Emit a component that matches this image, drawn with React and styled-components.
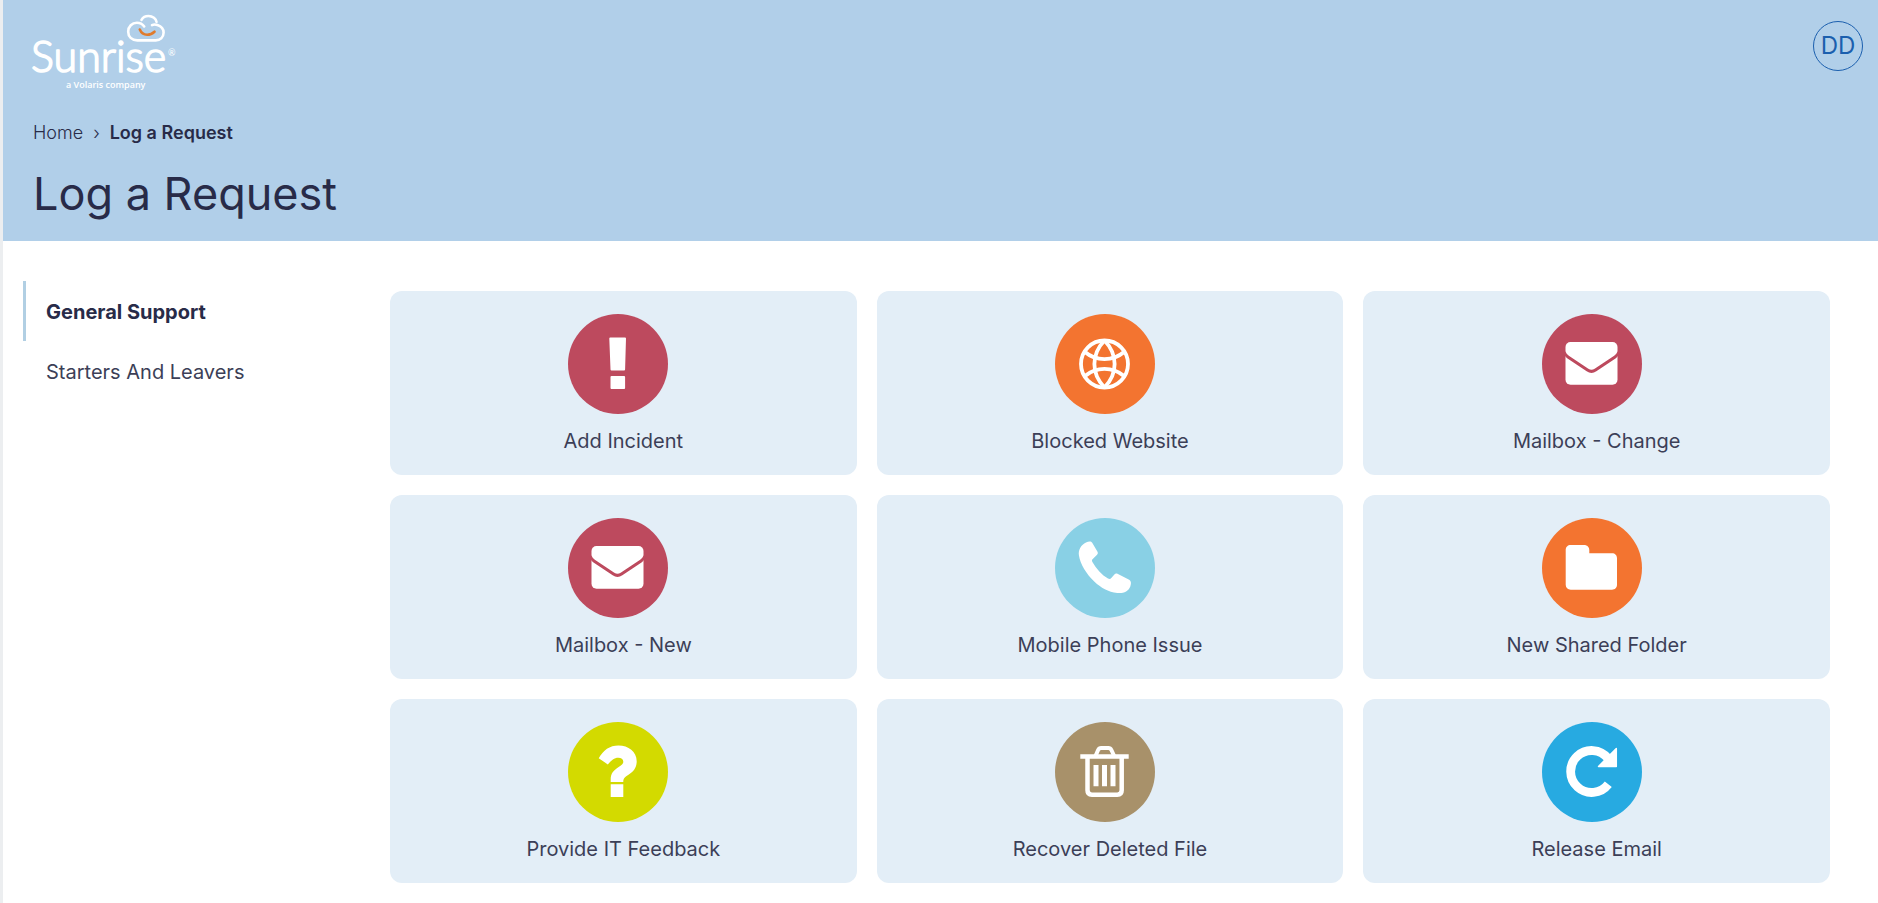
import React from "react";
import styled, { createGlobalStyle } from "styled-components";

const GlobalStyle = createGlobalStyle`
  *, *::before, *::after { box-sizing: border-box; }
  body {
    margin: 0;
    background: #fff;
    color: #282b48;
    font-family: Inter, "Open Sans", sans-serif;
    font-weight: 400;
  }
  a { color: inherit; text-decoration: none; }
`;

const Page = styled.div`
  min-height: 100vh;
  border-left: 3px solid #eceef0;
`;

const Header = styled.header`
  background: #b1cfe9;
  padding: 12px 15px 17px 30px;
`;

const TopBar = styled.div`
  display: flex;
  justify-content: space-between;
  align-items: flex-start;
`;

const LogoLink = styled.a`
  display: block;
  margin-left: -4px;
  line-height: 0;
`;

const Avatar = styled.button`
  width: 50px;
  height: 50px;
  margin-top: 9px;
  padding: 0;
  border: 1px solid #1b5fae;
  border-radius: 50%;
  background: transparent;
  color: #1b5fae;
  font: 400 24px/48px Inter, sans-serif;
  cursor: pointer;
`;

const Breadcrumb = styled.ol`
  display: flex;
  gap: 10px;
  margin: 29px 0 0;
  padding: 0;
  list-style: none;
  font-size: 18px;
  line-height: 24px;
`;

const Crumb = styled.li`
  font-weight: ${(p) => (p.$current ? 600 : 300)};
`;

const Title = styled.h1`
  margin: 19px 0 0;
  font-size: 45px;
  line-height: 60px;
  font-weight: 400;
`;

const Body = styled.div`
  display: grid;
  grid-template-columns: 347px 1fr;
  gap: 20px;
  padding: 40px 48px 20px 20px;
`;

const NavLink = styled.a`
  display: block;
  height: 60px;
  padding: 0 20px;
  border-left: 3px solid ${(p) => (p.$active ? "#b1cfe3" : "transparent")};
  color: ${(p) => (p.$active ? "#282b48" : "#3c3f57")};
  font-size: 20px;
  line-height: 62px;
  font-weight: ${(p) => (p.$active ? 700 : 400)};
`;

const CardGrid = styled.main`
  display: grid;
  grid-template-columns: repeat(3, 1fr);
  gap: 20px;
  padding-top: 10px;
`;

const Card = styled.a`
  display: flex;
  flex-direction: column;
  align-items: center;
  gap: 12px;
  padding: 23px 20px 19px;
  border-radius: 12px;
  background: #e3eef7;
  color: #3c3f57;
  font-size: 20px;
  line-height: 30px;
`;

const Badge = styled.svg`
  display: block;
  width: 100px;
  height: 100px;
  margin-right: 10px;
  border-radius: 50%;
  background: ${(p) => p.$color};
`;

const Logo = () => (
  <svg width="150" height="80" viewBox="-4 0 150 80" role="img" aria-label="Sunrise, a Volaris company">
    <g fill="none" strokeLinecap="round" strokeWidth="2.6">
      <path
        stroke="#fff"
        d="M119 13.200c1.500-0.800 3.700-0.800 5.400-0.200 3.500 1.200 6.200 3.500 6.200 7.600 0 5-3.600 7.800-7.800 7.800h-18.500c-5.600 0-9.100-3.700-9.100-8.700 0-5.300 3.900-8.900 8.700-8.900 3.200 0 5.600 1.300 7.300 3.700"
      />
      <path stroke="#fff" d="M108.500 7.800c1.400-2.500 4-3.800 7-3.800 4.200 0 7.600 2.900 8 5.900" />
      <path stroke="#e07b2c" d="M106.800 17.500c1.400 3.300 4 5.200 7.300 5.200 2.800 0 5.400-1.100 7.400-3" />
    </g>
    <text x="-2" y="60" fill="#fff" stroke="#fff" strokeWidth="1.6" strokeLinejoin="round" fontFamily="Lato, sans-serif" fontSize="43" fontWeight="300">
      Sunrise
    </text>
    <text x="135" y="44" fill="#fff" fontFamily="Lato, sans-serif" fontSize="9">®</text>
    <text x="33" y="76" fill="#fff" fontFamily="Open Sans, sans-serif" fontSize="9" fontWeight="600">
      a Volaris company
    </text>
  </svg>
);

const glyphs = {
  alert: (
    <g fill="#fff" stroke="#fff" strokeWidth="2" strokeLinejoin="round">
      <path d="M42.300 24.500h14.700l-0.900 31h-12.600z" />
      <path d="M43.500 63h12.600v11h-12.600z" />
    </g>
  ),
  globe: (
    <g fill="none" stroke="#fff" strokeWidth="3.800">
      <circle cx="49.500" cy="50" r="23.500" />
      <path d="M49.500 26.500c-13.500 14-13.500 33 0 47M49.500 26.500c13.500 14 13.500 33 0 47" />
      <path d="M30 38c11 9.500 28 9.500 39 0M30 62c11-9.500 28-9.500 39 0" />
    </g>
  ),
  mail: (color) => (
    <g>
      <rect x="23.500" y="28" width="52" height="42.700" rx="5" fill="#fff" />
      <path d="M22 38c1 2.500 2.300 3.700 4 5l19.500 13q4 2.800 8 0l19.500-13c1.700-1.300 3-2.500 4-5" fill="none" stroke={color} strokeWidth="3" />
    </g>
  ),
  phone: (
    <path
      fill="#fff"
      d="M31 24.500c2.500-1.200 5-1.800 6.200 0.200l5.300 9c0.700 1.200 0.300 2.300-0.700 3.300l-4.300 4.300c-0.700 0.700-0.700 1.600-0.100 2.600 4 7 9.300 12.800 15.600 16.700 1.200 0.700 2.500 0.600 3.300-0.500l3.100-3.700c0.900-1 1.900-1.200 3.100-0.600l11.200 5.800c2.600 1.400 2.700 3.900 1.600 6.900-2 5.200-7 7-13 6.400-9-0.900-16.500-5.300-22.800-11.200-8-7.600-14.400-17.800-15.600-26.500-0.800-5.400 2.200-10.400 7.100-12.700z"
    />
  ),
  folder: (
    <path
      fill="#fff"
      d="M28.700 27h13.300c3.300 0 5.300 2.200 5.300 5.200v3.100h22.700c3 0 5 2 5 5v26.500c0 3-2 4.900-5 4.900h-41.300c-3 0-5-1.900-5-4.900v-34.800c0-3 2-5 5-5z"
    />
  ),
  question: (
    <g fill="#fff">
      <path d="M30.700 36.300c4.500-8.300 11-12.900 19.800-12.900 9.800 0 18.200 6.200 18.200 15.800 0 6.900-3.400 10.400-8.600 13.800-3.400 2.200-4.800 3.500-4.800 7h-12.600v-2.300c0-6.200 2.800-9.200 7.600-12.400 3.600-2.400 5-3.500 5-5.600 0-2.400-2.100-4-5-4-4.300 0-7 2.700-10.500 6.700z" />
      <path d="M42.700 62.300h12.600v12.700h-12.600z" />
    </g>
  ),
  trash: (
    <g fill="none" stroke="#fff" strokeWidth="4.500">
      <path d="M25.300 34.500h48.400M32.500 35v33.300q0 4.400 4.400 4.400h25.400q4.400 0 4.400-4.400v-33.300" />
      <path d="M40.500 34l2.600-6q1-2.100 3-2.100h7.300q2 0 3 2.100l2.800 6" strokeWidth="4" />
      <path d="M41 43v21.300M49.500 43v21.300M58 43v21.300" strokeWidth="5" />
    </g>
  ),
  refresh: (
    <g>
      <path d="M66.300 62.300a21 21 0 1 1-0.300-26" fill="none" stroke="#fff" strokeWidth="8.800" />
      <path d="M74.300 26.500v18h-17.800z" fill="#fff" stroke="#fff" strokeWidth="1.500" strokeLinejoin="round" />
    </g>
  ),
};

const services = [
  { label: "Add Incident", icon: "alert", color: "#bd4a5e" },
  { label: "Blocked Website", icon: "globe", color: "#f37430" },
  { label: "Mailbox - Change", icon: "mail", color: "#bd4a5e" },
  { label: "Mailbox - New", icon: "mail", color: "#bd4a5e" },
  { label: "Mobile Phone Issue", icon: "phone", color: "#89d0e5" },
  { label: "New Shared Folder", icon: "folder", color: "#f37430" },
  { label: "Provide IT Feedback", icon: "question", color: "#d3da00" },
  { label: "Recover Deleted File", icon: "trash", color: "#a8916a" },
  { label: "Release Email", icon: "refresh", color: "#27aae1" },
];

const ServiceCard = ({ label, icon, color }) => {
  const glyph = glyphs[icon];
  return (
    <Card href="#">
      <Badge viewBox="0 0 100 100" aria-hidden="true" $color={color}>
        {typeof glyph === "function" ? glyph(color) : glyph}
      </Badge>
      {label}
    </Card>
  );
};

export default function App() {
  return (
    <>
      <GlobalStyle />
      <Page>
        <Header>
          <TopBar>
            <LogoLink href="#">
              <Logo />
            </LogoLink>
            <Avatar type="button">DD</Avatar>
          </TopBar>
          <nav aria-label="Breadcrumb">
            <Breadcrumb>
              <Crumb><a href="#">Home</a></Crumb>
              <Crumb aria-hidden="true">›</Crumb>
              <Crumb $current aria-current="page">Log a Request</Crumb>
            </Breadcrumb>
          </nav>
          <Title>Log a Request</Title>
        </Header>
        <Body>
          <nav aria-label="Categories">
            <NavLink href="#" $active>General Support</NavLink>
            <NavLink href="#">Starters And Leavers</NavLink>
          </nav>
          <CardGrid>
            {services.map((service) => (
              <ServiceCard key={service.label} {...service} />
            ))}
          </CardGrid>
        </Body>
      </Page>
    </>
  );
}
